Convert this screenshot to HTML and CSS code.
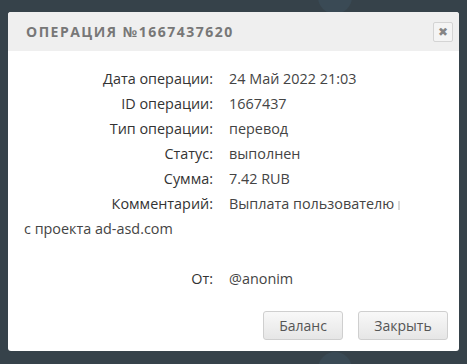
FILE: index.html
```html
<!DOCTYPE html>
<html lang="ru">
<head>
<meta charset="utf-8">
<link rel="stylesheet" href="styles.css">
</head>
<body>
<div class="backdrop">
  <div class="bg-circle top"></div>
  <div class="bg-circle bottom"></div>
  <div class="dialog">
    <div class="dialog-header">
      <div class="dialog-title">Операция №1667437620</div>
      <button class="close-btn" type="button">&#x2716;</button>
    </div>
    <div class="dialog-body">
      <div class="row"><span class="label">Дата операции:</span><span class="value">24 Май 2022 21:03</span></div>
      <div class="row"><span class="label">ID операции:</span><span class="value">1667437</span></div>
      <div class="row"><span class="label">Тип операции:</span><span class="value">перевод</span></div>
      <div class="row"><span class="label">Статус:</span><span class="value">выполнен</span></div>
      <div class="row"><span class="label">Сумма:</span><span class="value">7.42 RUB</span></div>
      <div class="row"><span class="label">Комментарий:</span><span class="value">Выплата пользователю <span class="redact"></span><br>с проекта ad-asd.com</span></div>
      <div class="row empty"></div>
      <div class="row"><span class="label">От:</span><span class="value">@anonim</span></div>
    </div>
    <div class="dialog-footer">
      <button class="btn btn-balance" type="button">Баланс</button>
      <button class="btn btn-close" type="button">Закрыть</button>
    </div>
  </div>
</div>
</body>
</html>
```

FILE: styles.css
```css
* { box-sizing: border-box; }
html, body { margin: 0; padding: 0; }
body {
  background: #36424a;
  width: 467px;
  height: 364px;
  overflow: hidden;
}
.backdrop {
  position: relative;
  padding: 12px 8px 0 8px;
  height: 364px;
  overflow: hidden;
}
.bg-circle {
  position: absolute;
  width: 34px;
  height: 34px;
  border-radius: 50%;
  background: #3a4a55;
  left: 318px;
}
.bg-circle.top { top: -20px; }
.bg-circle.bottom { top: 352px; }
.dialog {
  position: relative;
  background: #ffffff;
  border-radius: 3px;
  height: 339px;
  display: flex;
  flex-direction: column;
  overflow: hidden;
}
.dialog-header {
  background: #efefef;
  height: 39px;
  display: flex;
  align-items: center;
  justify-content: space-between;
  padding: 0 6px 0 18px;
}
.dialog-title {
  font: bold 14px "Open Sans", sans-serif;
  color: #777777;
  text-transform: uppercase;
  letter-spacing: 1.5px;
}
.close-btn {
  width: 20px;
  height: 20px;
  padding: 0;
  border: 1px solid #d4d4d4;
  border-radius: 2px;
  background: #f4f4f4;
  color: #858585;
  font: bold 12px "DejaVu Sans", sans-serif;
  line-height: 18px;
  text-align: center;
  margin-top: 1px;
}
.dialog-body {
  flex: 1;
  padding: 15px 16px 0 16px;
  font: 14.4px "Open Sans", sans-serif;
  line-height: 25px;
  color: #333333;
}
.row { min-height: 25px; }
.label {
  display: inline-block;
  width: 205px;
  text-align: right;
  color: #333333;
  padding-right: 16px;
}
.value { color: #444444; }
.redact {
  display: inline-block;
  width: 2px;
  height: 9px;
  background: #d8d8d8;
  vertical-align: -1px;
}
.dialog-footer {
  display: flex;
  justify-content: flex-end;
  gap: 15px;
  padding: 0 11px 11px 0;
}
.btn {
  height: 29px;
  border: 1px solid #cfcfcf;
  border-radius: 3px;
  background: linear-gradient(#f8f8f8, #e6e6e6);
  font: 14px "Open Sans", sans-serif;
  color: #555555;
  padding: 0;
}
.btn-balance { width: 80px; }
.btn-close { width: 90px; }
```
